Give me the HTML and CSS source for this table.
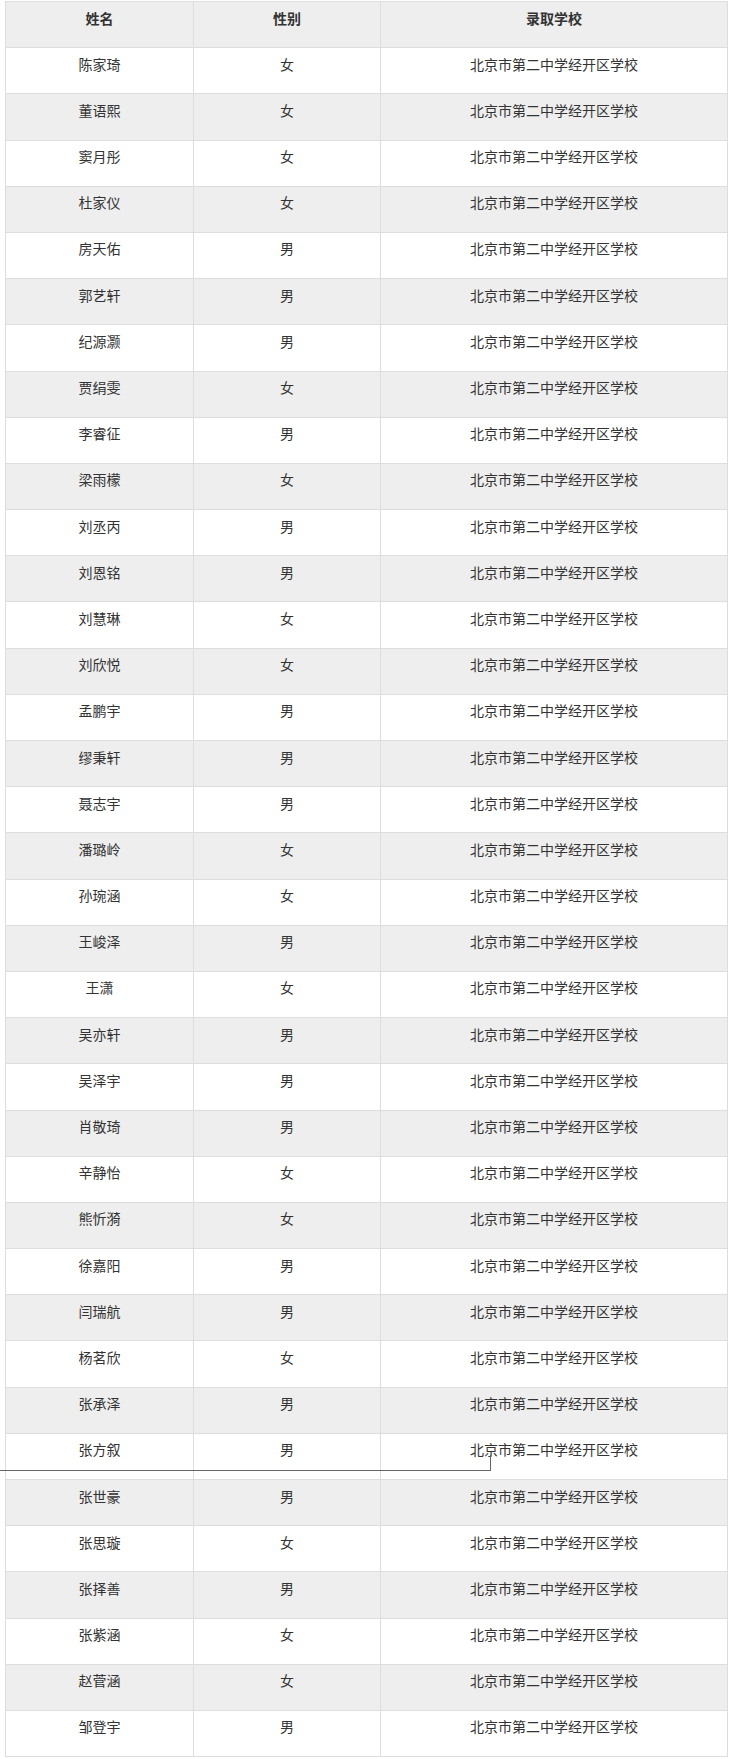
FILE: index.html
```html
<!DOCTYPE html>
<html lang="zh-CN">
<head>
<meta charset="utf-8">
<title>录取名单</title>
<link rel="stylesheet" href="styles.css">
</head>
<body>
<div class="page">
<table class="list">
<colgroup><col class="c1"><col class="c2"><col class="c3"></colgroup>
<thead>
<tr><th>姓名</th><th>性别</th><th>录取学校</th></tr>
</thead>
<tbody>
<tr><td>陈家琦</td><td>女</td><td>北京市第二中学经开区学校</td></tr>
<tr><td>董语熙</td><td>女</td><td>北京市第二中学经开区学校</td></tr>
<tr><td>窦月彤</td><td>女</td><td>北京市第二中学经开区学校</td></tr>
<tr><td>杜家仪</td><td>女</td><td>北京市第二中学经开区学校</td></tr>
<tr><td>房天佑</td><td>男</td><td>北京市第二中学经开区学校</td></tr>
<tr><td>郭艺轩</td><td>男</td><td>北京市第二中学经开区学校</td></tr>
<tr><td>纪源灏</td><td>男</td><td>北京市第二中学经开区学校</td></tr>
<tr><td>贾绢雯</td><td>女</td><td>北京市第二中学经开区学校</td></tr>
<tr><td>李睿征</td><td>男</td><td>北京市第二中学经开区学校</td></tr>
<tr><td>梁雨檬</td><td>女</td><td>北京市第二中学经开区学校</td></tr>
<tr><td>刘丞丙</td><td>男</td><td>北京市第二中学经开区学校</td></tr>
<tr><td>刘恩铭</td><td>男</td><td>北京市第二中学经开区学校</td></tr>
<tr><td>刘慧琳</td><td>女</td><td>北京市第二中学经开区学校</td></tr>
<tr><td>刘欣悦</td><td>女</td><td>北京市第二中学经开区学校</td></tr>
<tr><td>孟鹏宇</td><td>男</td><td>北京市第二中学经开区学校</td></tr>
<tr><td>缪秉轩</td><td>男</td><td>北京市第二中学经开区学校</td></tr>
<tr><td>聂志宇</td><td>男</td><td>北京市第二中学经开区学校</td></tr>
<tr><td>潘璐岭</td><td>女</td><td>北京市第二中学经开区学校</td></tr>
<tr><td>孙琬涵</td><td>女</td><td>北京市第二中学经开区学校</td></tr>
<tr><td>王峻泽</td><td>男</td><td>北京市第二中学经开区学校</td></tr>
<tr><td>王潇</td><td>女</td><td>北京市第二中学经开区学校</td></tr>
<tr><td>吴亦轩</td><td>男</td><td>北京市第二中学经开区学校</td></tr>
<tr><td>吴泽宇</td><td>男</td><td>北京市第二中学经开区学校</td></tr>
<tr><td>肖敬琦</td><td>男</td><td>北京市第二中学经开区学校</td></tr>
<tr><td>辛静怡</td><td>女</td><td>北京市第二中学经开区学校</td></tr>
<tr><td>熊忻漪</td><td>女</td><td>北京市第二中学经开区学校</td></tr>
<tr><td>徐嘉阳</td><td>男</td><td>北京市第二中学经开区学校</td></tr>
<tr><td>闫瑞航</td><td>男</td><td>北京市第二中学经开区学校</td></tr>
<tr><td>杨茗欣</td><td>女</td><td>北京市第二中学经开区学校</td></tr>
<tr><td>张承泽</td><td>男</td><td>北京市第二中学经开区学校</td></tr>
<tr><td>张方叙</td><td>男</td><td>北京市第二中学经开区学校</td></tr>
<tr><td>张世豪</td><td>男</td><td>北京市第二中学经开区学校</td></tr>
<tr><td>张思璇</td><td>女</td><td>北京市第二中学经开区学校</td></tr>
<tr><td>张择善</td><td>男</td><td>北京市第二中学经开区学校</td></tr>
<tr><td>张紫涵</td><td>女</td><td>北京市第二中学经开区学校</td></tr>
<tr><td>赵菅涵</td><td>女</td><td>北京市第二中学经开区学校</td></tr>
<tr><td>邹登宇</td><td>男</td><td>北京市第二中学经开区学校</td></tr>
</tbody>
</table>
<div class="connector"></div>
</div>
</body>
</html>
```
FILE: styles.css
```css
html, body {
  margin: 0;
  padding: 0;
  background: #fff;
}
.page {
  position: relative;
  padding: 1px 4px 0 5px;
  font-family: "Noto Sans CJK SC", "Noto Sans", sans-serif;
  font-size: 14px;
  color: #333;
}
.list {
  width: 722px;
  border-collapse: collapse;
  table-layout: fixed;
}
.c1 { width: 188px; }
.c2 { width: 187px; }
.c3 { width: 347px; }
.list th,
.list td {
  border: 1px solid #ddd;
  text-align: center;
  vertical-align: top;
  line-height: 21px;
  padding: 5.5px 0 18.7px;
}
.list th {
  font-weight: bold;
  background: #eee;
}
.list tbody tr:nth-child(even) td {
  background: #eee;
}
.connector {
  position: absolute;
  left: 0;
  top: 1455px;
  width: 490px;
  height: 15px;
  border-right: 1px solid #666;
  border-bottom: 1px solid #666;
}
```
